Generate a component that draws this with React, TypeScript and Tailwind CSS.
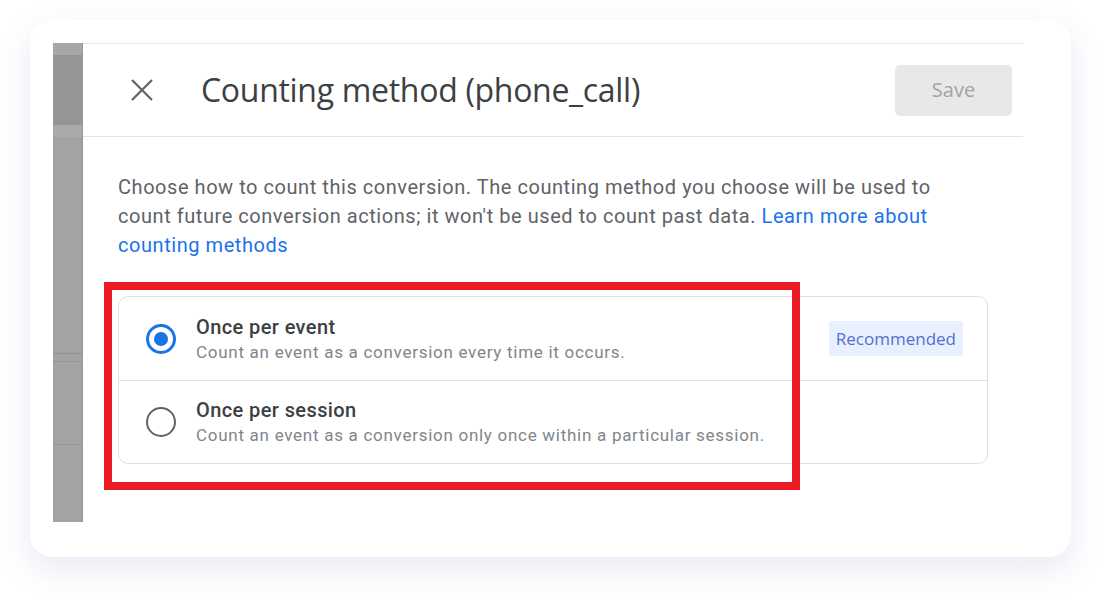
const options = [
  {
    id: "event",
    title: "Once per event",
    desc: "Count an event as a conversion every time it occurs.",
    recommended: true,
  },
  {
    id: "session",
    title: "Once per session",
    desc: "Count an event as a conversion only once within a particular session.",
    recommended: false,
  },
]

function CloseIcon() {
  return (
    <svg width="22" height="22" viewBox="0 0 22 22" fill="none" stroke="#5f6368" strokeWidth="2.2" strokeLinecap="butt">
      <path d="M1 1L21 21M21 1L1 21" />
    </svg>
  )
}

export default function App() {
  const selected = "event"

  return (
    <div className="w-[1101px] h-[596px] bg-white pt-[20px] pl-[30px] font-['Roboto',sans-serif]">
      <div className="relative w-[1041px] h-[537px] bg-white rounded-[22px] shadow-[0_12px_32px_rgba(110,120,190,0.16)] pt-[23px] pl-[23px] flex">
        {/* backdrop strip */}
        <div className="w-[30px] h-[479px] flex flex-col bg-[#a3a3a3] border-r border-[#969696]">
          <div className="h-[12px] bg-[#a7a7a7]" />
          <div className="h-[70px] bg-[#959595]" />
          <div className="h-[12px] bg-[#aaaaaa]" />
          <div className="h-[216px]" />
          <div className="h-px bg-[#929292]" />
          <div className="h-[7px]" />
          <div className="h-px bg-[#959595]" />
          <div className="h-[82px]" />
          <div className="h-px bg-[#959595]" />
        </div>

        {/* panel */}
        <div className="w-[940px] border-t border-[#e6e6e6]">
          <div className="h-[93px] flex items-center border-b border-[#e3e3e3] pl-[48px] pr-[11px]">
            <CloseIcon />
            <h1 className="ml-[48px] text-[32px] text-[#3c4043] font-['Open_Sans',sans-serif] tracking-[-0.3px]">
              Counting method (phone_call)
            </h1>
            <button className="ml-auto w-[117px] h-[51px] rounded-[5px] bg-[#e8e8e8] text-[20px] font-medium text-[#a3a3a3] font-['Open_Sans',sans-serif]">
              Save
            </button>
          </div>

          <div className="pl-[35px] pt-[36px]">
            <p className="text-[20px] leading-[29px] tracking-[0.55px] text-[#5f6368]">
              Choose how to count this conversion. The counting method you choose will be used to
              <br />
              count future conversion actions; it won't be used to count past data.{" "}
              <span className="text-[#1a73e8]">
                Learn more about
                <br />
                counting methods
              </span>
            </p>

            <div className="mt-[36px] w-[870px] rounded-[10px] border border-[#e0e0e0]">
              {options.map((o, i) => (
                <div
                  key={o.id}
                  className={`h-[83px] flex items-center pl-[27px] pr-[24px] ${i > 0 ? "border-t border-[#e3e3e3]" : ""}`}
                >
                  {o.id === selected ? (
                    <div className="w-[30px] h-[30px] rounded-full border-[3px] border-[#1a73e8] flex items-center justify-center">
                      <div className="w-[14px] h-[14px] rounded-full bg-[#1a73e8]" />
                    </div>
                  ) : (
                    <div className="w-[30px] h-[30px] rounded-full border-[2.5px] border-[#5f6368]" />
                  )}
                  <div className="ml-[20px] flex flex-col">
                    <span className="text-[20px] font-medium leading-[26px] tracking-[0.4px] text-[#3c4043]">{o.title}</span>
                    <span className="text-[17px] leading-[24px] tracking-[0.72px] text-[#80868b]">{o.desc}</span>
                  </div>
                  {o.recommended && (
                    <span className="ml-auto h-[35px] px-[7px] flex items-center bg-[#e8f0fe] rounded-[3px] text-[17px] text-[#5070d0] font-['Open_Sans',sans-serif]">
                      Recommended
                    </span>
                  )}
                </div>
              ))}
            </div>
          </div>
        </div>

        {/* annotation highlight */}
        <div className="absolute left-[74px] top-[262px] w-[696px] h-[208px] border-[8px] border-[#ed1c24]" />
      </div>
    </div>
  )
}
